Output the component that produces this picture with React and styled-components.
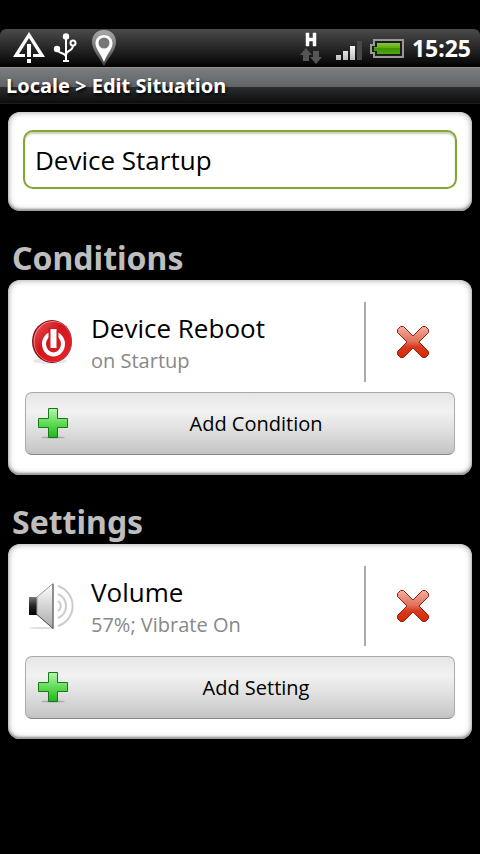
import * as React from "react";
import styled, { createGlobalStyle } from "styled-components";

export default function App() {
  return (
    <>
      <GlobalStyle />
      <Page>
        <StatusBar>
          <StatusGroup>
            <WarningIcon />
            <UsbIcon />
            <PinIcon />
          </StatusGroup>
          <StatusGroup>
            <DataIcon />
            <SignalIcon />
            <BatteryIcon />
            <Clock>15:25</Clock>
          </StatusGroup>
        </StatusBar>
        <TitleBar>Locale &gt; Edit Situation</TitleBar>
        <Main>
          <NameCard>
            <NameInput
              type="text"
              aria-label="Situation name"
              defaultValue="Device Startup"
            />
          </NameCard>
          <Section
            heading="Conditions"
            icon={<PowerIcon />}
            title="Device Reboot"
            detail="on Startup"
            action="Add Condition"
          />
          <Section
            heading="Settings"
            icon={<SpeakerIcon />}
            title="Volume"
            detail="57%; Vibrate On"
            action="Add Setting"
          />
        </Main>
      </Page>
    </>
  );
}

function Section(props) {
  return (
    <section>
      <Heading>{props.heading}</Heading>
      <ListCard>
        <Row>
          <RowIcon>{props.icon}</RowIcon>
          <RowText>
            <RowTitle>{props.title}</RowTitle>
            <RowDetail>{props.detail}</RowDetail>
          </RowText>
          <DeleteButton type="button" aria-label={`Delete ${props.title}`}>
            <CrossIcon />
          </DeleteButton>
        </Row>
        <AddButton type="button">
          <PlusIcon />
          <AddLabel>{props.action}</AddLabel>
        </AddButton>
      </ListCard>
    </section>
  );
}

function WarningIcon() {
  return (
    <svg width="32" height="32" viewBox="0 0 32 32" aria-hidden="true">
      <path d="M16 0L32 25H20V22H26L16 6L6 22H12V25H0Z" fill="#fff" />
      <path d="M14 12H18V25H14ZM14 27H18V31H14Z" fill="#fff" />
    </svg>
  );
}

function UsbIcon() {
  return (
    <svg width="24" height="30" viewBox="0 0 24 30" aria-hidden="true">
      <g fill="none" stroke="#fff" strokeWidth="2">
        <path d="M13 3V28M4 16C4 21 13 19 13 24M20 12C20 19 13 17 13 22" />
        <circle cx="20" cy="10" r="2.500" />
      </g>
      <circle cx="13" cy="3.500" r="3.200" fill="#fff" />
      <circle cx="4" cy="16" r="3.200" fill="#fff" />
      <path d="M10 27H16V29H10Z" fill="#fff" />
    </svg>
  );
}

function PinIcon() {
  return (
    <svg width="38" height="38" viewBox="-6 0 38 38" aria-hidden="true">
      <defs>
        <linearGradient id="pinEdge" x1="0" y1="0" x2="0" y2="1">
          <stop offset="0" stopColor="#aaa" />
          <stop offset="1" stopColor="#444" />
        </linearGradient>
      </defs>
      <path
        d="M13 1C5.500 1 1 6 1 13C1 21 8 28 13 37C18 28 25 21 25 13C25 6 20.500 1 13 1Z"
        fill="url(#pinEdge)"
      />
      <path
        d="M13 6C8 6 4.500 9.500 4.500 14.500C4.500 20 10 25 13 33C16 25 21.500 20 21.500 14.500C21.500 9.500 18 6 13 6Z"
        fill="#fff"
      />
      <circle cx="13" cy="14" r="5.500" fill="#777" />
    </svg>
  );
}

function DataIcon() {
  return (
    <svg width="28" height="32" viewBox="0 0 28 32" aria-hidden="true">
      <path d="M6 1H9V6H13V1H16V14H13V9H9V14H6Z" fill="#fff" stroke="#fff" strokeWidth="0.500" />
      <path d="M6 16L12 23H9V29H3V23H0Z" fill="#555" />
      <path d="M13 19H19V25H22L16 32L10 25H13Z" fill="#555" />
    </svg>
  );
}

function SignalIcon() {
  return (
    <svg width="26" height="24" viewBox="0 -4 26 24" aria-hidden="true">
      <defs>
        <linearGradient id="bars" x1="0" y1="0" x2="0" y2="20" gradientUnits="userSpaceOnUse">
          <stop offset="0.200" stopColor="#fff" />
          <stop offset="1" stopColor="#bbb" />
        </linearGradient>
      </defs>
      <path d="M0 15H5V20H0ZM7 11H12V20H7ZM14 6H19V20H14Z" fill="url(#bars)" />
      <path d="M21 1H26V20H21Z" fill="#484848" />
    </svg>
  );
}

function BatteryIcon() {
  return (
    <svg width="34" height="19" viewBox="0 0 34 19" aria-hidden="true">
      <defs>
        <linearGradient id="charge" x1="0" y1="0" x2="0" y2="1">
          <stop offset="0" stopColor="#8cc63a" />
          <stop offset="0.450" stopColor="#5cab10" />
          <stop offset="0.500" stopColor="#3f9400" />
          <stop offset="1" stopColor="#4da60a" />
        </linearGradient>
      </defs>
      <path
        d="M4 1H33V18H4V14H1V6H4Z"
        fill="#1c1c1c"
        stroke="#999"
        strokeWidth="2"
      />
      <path d="M7 4H30V15H7V12H4V8H7Z" fill="url(#charge)" />
    </svg>
  );
}

function PowerIcon() {
  return (
    <svg width="48" height="48" viewBox="0 0 48 48" aria-hidden="true">
      <defs>
        <linearGradient id="power" x1="0" y1="0" x2="1" y2="1">
          <stop offset="0" stopColor="#f0525a" />
          <stop offset="0.400" stopColor="#d0181e" />
          <stop offset="1" stopColor="#e8222c" />
        </linearGradient>
      </defs>
      <ellipse cx="22" cy="43" rx="17" ry="3" fill="#e8e8e8" />
      <ellipse cx="24" cy="23.500" rx="20" ry="21.500" fill="#8e0d14" />
      <ellipse cx="24.500" cy="23.500" rx="19" ry="20.500" fill="#f08a8e" />
      <ellipse cx="25" cy="23.800" rx="18.500" ry="20" fill="url(#power)" />
      <ellipse
        cx="25.500"
        cy="26"
        rx="9.500"
        ry="10.500"
        fill="none"
        stroke="#fff"
        strokeWidth="4"
      />
      <path d="M20.500 10H30.500V31H20.500Z" fill="#d31a21" />
      <path d="M22.500 11H28.500V30H22.500Z" fill="#fff" />
    </svg>
  );
}

function SpeakerIcon() {
  return (
    <svg width="48" height="48" viewBox="0 0 48 48" aria-hidden="true">
      <defs>
        <linearGradient id="cone" x1="0" y1="0" x2="0" y2="1">
          <stop offset="0" stopColor="#fff" />
          <stop offset="1" stopColor="#aaa" />
        </linearGradient>
        <linearGradient id="magnet" x1="0" y1="0" x2="0" y2="1">
          <stop offset="0" stopColor="#777" />
          <stop offset="0.500" stopColor="#222" />
          <stop offset="1" stopColor="#000" />
        </linearGradient>
      </defs>
      <ellipse cx="14" cy="46" rx="13" ry="1" fill="#ddd" />
      <path d="M1 15H9V33H1Z" fill="url(#magnet)" />
      <path
        d="M9 15L25 1.500V46.500L9 32.500Z"
        fill="url(#cone)"
        stroke="#999"
      />
      <path d="M9 32.500L25 46.500V2" fill="none" stroke="#555" />
      <g fill="none" stroke="#ccc" strokeWidth="2">
        <path d="M30 4A21 21 0 0 1 30 44" />
        <path d="M30 12A13 13 0 0 1 30 36" />
        <path d="M30 19A6 6 0 0 1 30 29" />
      </g>
    </svg>
  );
}

function CrossIcon() {
  return (
    <svg width="34" height="34" viewBox="0 0 34 34" aria-hidden="true">
      <defs>
        <linearGradient id="cross" x1="0" y1="0" x2="0" y2="1">
          <stop offset="0" stopColor="#f2b0a0" />
          <stop offset="0.500" stopColor="#e06c55" />
          <stop offset="0.650" stopColor="#d63c20" />
          <stop offset="1" stopColor="#d42800" />
        </linearGradient>
      </defs>
      <path
        d="M4.500 1.500H7.500L17 11L26.500 1.500H29.500L32.500 4.500V7.500L23 17L32.500 26.500V29.500L29.500 32.500H26.500L17 23L7.500 32.500H4.500L1.500 29.500V26.500L11 17L1.500 7.500V4.500Z"
        fill="url(#cross)"
        stroke="#9c1c10"
        strokeLinejoin="round"
      />
    </svg>
  );
}

function PlusIcon() {
  return (
    <svg width="32" height="32" viewBox="0 0 32 32" aria-hidden="true">
      <defs>
        <linearGradient id="plus" x1="0" y1="0" x2="0" y2="1">
          <stop offset="0" stopColor="#b8f5b0" />
          <stop offset="0.500" stopColor="#62dc58" />
          <stop offset="1" stopColor="#22b41c" />
        </linearGradient>
      </defs>
      <ellipse cx="16" cy="29.500" rx="12" ry="1" fill="#aaa" />
      <path
        d="M11.500 0.500H20.500V10.500H30.500V19.500H20.500V29.500H11.500V19.500H1.500V10.500H11.500Z"
        fill="url(#plus)"
        stroke="#137a16"
      />
    </svg>
  );
}

const GlobalStyle = createGlobalStyle`
  * {
    box-sizing: border-box;
  }
  body {
    margin: 0;
    background: #000;
    font-family: "Open Sans", "Noto Sans", sans-serif;
  }
`;

const Page = styled.div`
  min-height: 100vh;
  padding-top: 29px;
  background: #000;
`;

const StatusBar = styled.div`
  display: flex;
  justify-content: space-between;
  align-items: center;
  height: 38px;
  padding: 0 9px 0 13px;
  border-radius: 6px 6px 0 0;
  background: linear-gradient(#4a4a4a, #0a0a0a 90%, #000);
`;

const StatusGroup = styled.div`
  display: flex;
  align-items: center;
  gap: 8px;
`;

const Clock = styled.time`
  color: #fff;
  font-family: "Noto Sans", sans-serif;
  font-size: 23px;
  font-weight: bold;
  line-height: 32px;
`;

const TitleBar = styled.h1`
  margin: 0;
  height: 37px;
  padding: 0 6px;
  border-top: 1px solid #8f9192;
  border-bottom: 1px solid #1c1c1c;
  background: linear-gradient(#7b7e80, #606365 19px, #2b2d2e 19px, #0c0d0e);
  color: #fff;
  font-family: "Noto Sans", sans-serif;
  font-size: 20px;
  font-weight: bold;
  line-height: 35px;
  text-shadow: 1px 2px 3px #000;
`;

const Main = styled.main`
  padding: 8px;
`;

const Card = styled.div`
  border-radius: 12px;
  background: #fff;
  box-shadow: inset 0 0 6px #999, inset 0 -2px 2px #999;
`;

const NameCard = styled(Card)`
  padding: 18px 15px 22px;
`;

const NameInput = styled.input`
  display: block;
  width: 100%;
  height: 59px;
  padding: 0 10px;
  border: 2px solid #82a82c;
  border-radius: 10px;
  outline: none;
  background: #fff;
  box-shadow: inset 0 2px 2px #ccc;
  color: #000;
  font-family: inherit;
  font-size: 26px;
`;

const Heading = styled.h2`
  margin: 0;
  padding: 25px 4px 1px;
  color: #bebebe;
  font-family: "Noto Sans", sans-serif;
  font-size: 32px;
  font-weight: bold;
  line-height: 43px;
`;

const ListCard = styled(Card)`
  display: flex;
  flex-direction: column;
  gap: 10px;
  padding: 22px 17px 20px;
`;

const Row = styled.div`
  display: flex;
  align-items: center;
  height: 80px;
  padding-left: 3px;
`;

const RowIcon = styled.div`
  display: flex;
  width: 48px;
`;

const RowText = styled.div`
  flex: 1;
  padding: 2px 0 0 15px;
`;

const RowTitle = styled.div`
  color: #000;
  font-size: 26px;
  line-height: 36px;
`;

const RowDetail = styled.div`
  color: #888;
  font-size: 20px;
  line-height: 30px;
`;

const DeleteButton = styled.button`
  display: flex;
  align-items: center;
  justify-content: center;
  width: 91px;
  height: 100%;
  padding: 0 0 0 4px;
  border: 0;
  border-left: 2px solid #aaa;
  background: none;
`;

const AddButton = styled.button`
  display: flex;
  align-items: center;
  height: 63px;
  padding: 0 11px;
  border: 1px solid #aaa;
  border-bottom-color: #888;
  border-radius: 7px;
  background: linear-gradient(#e6e6e6, #f2f2f2 30%, #e0e0e0 60%, #c4c4c4);
  color: #000;
  font-family: inherit;
  font-size: 20px;
`;

const AddLabel = styled.span`
  flex: 1;
  text-align: center;
`;
